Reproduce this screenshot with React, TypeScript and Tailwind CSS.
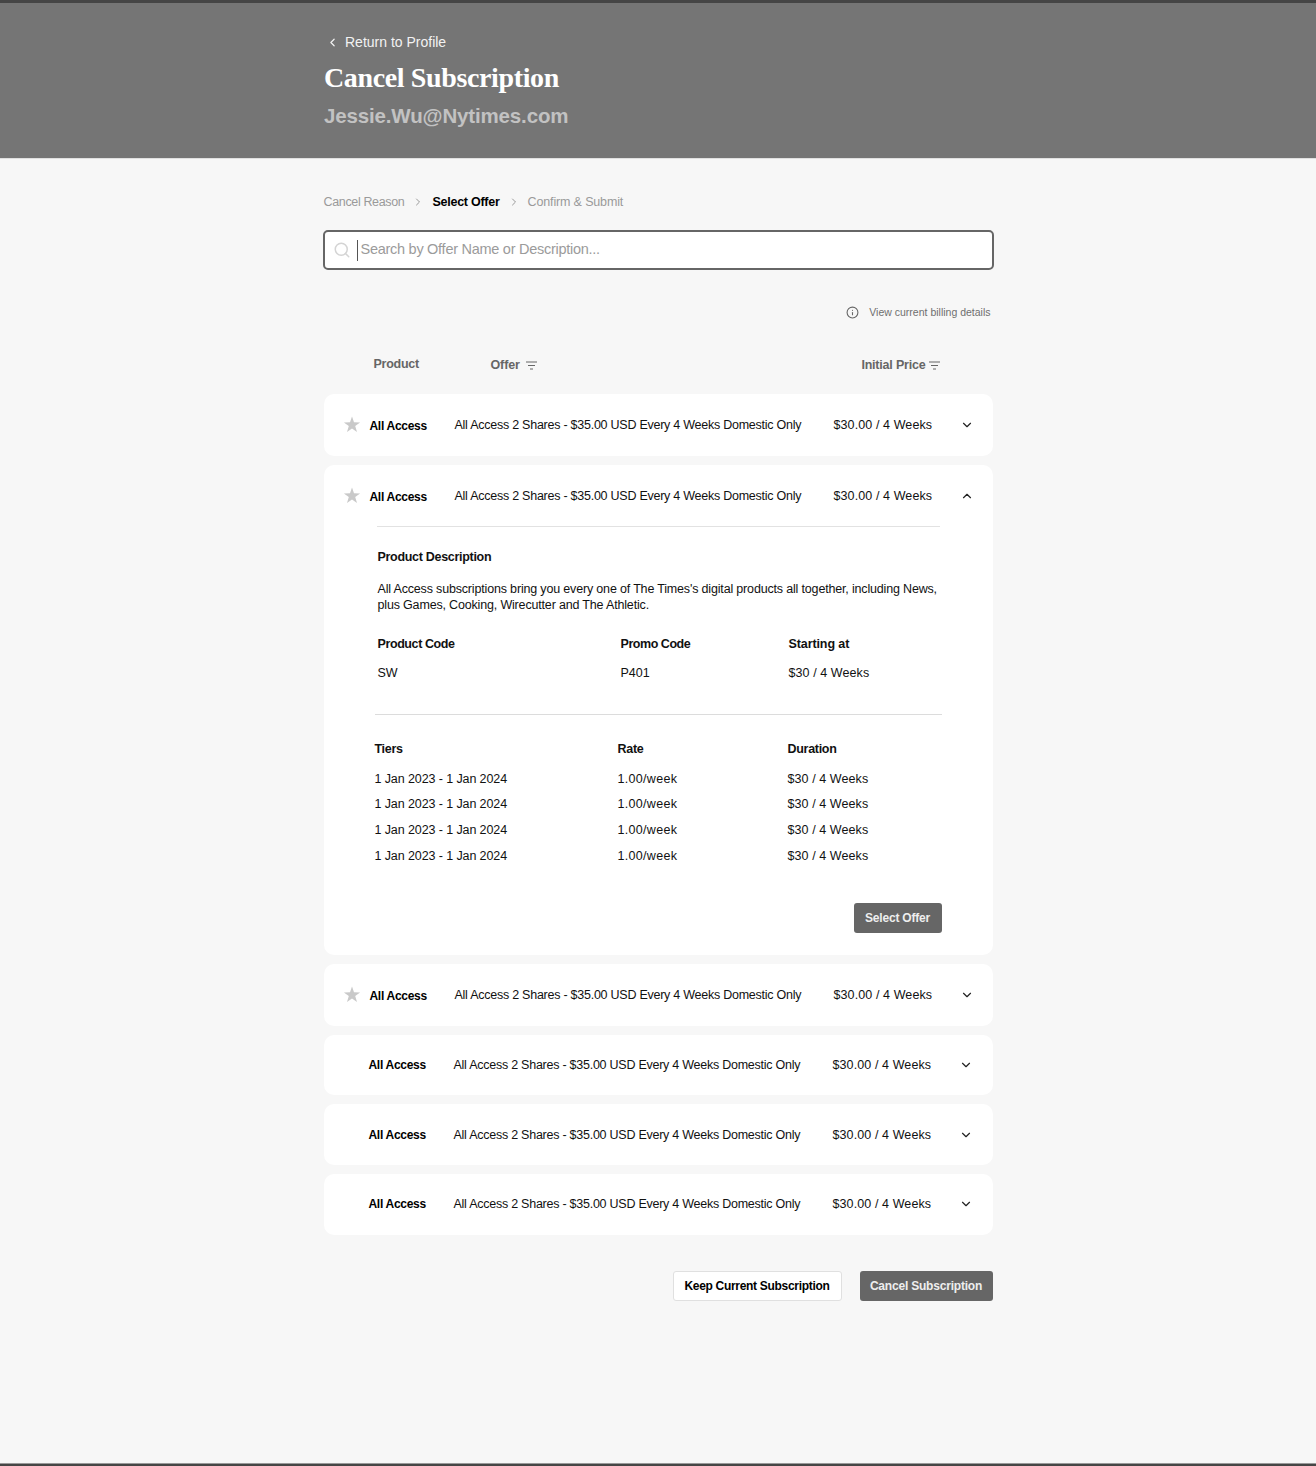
import { ChevronDown, ChevronLeft, ChevronRight, ChevronUp, Info, Search } from "lucide-react";

const sans = "font-['Liberation_Sans',Arial,sans-serif]";

const StarIcon = () => (
  <svg width="18" height="17" viewBox="0 0 18 17" className="shrink-0">
    <polygon points="9,0.5 11,6.3 17.1,6.4 12.2,10 14,15.9 9,12.4 4,15.9 5.8,10 0.9,6.4 7,6.3" fill="#c9c9c9" />
  </svg>
);

const FilterIcon = () => (
  <svg width="11" height="9" viewBox="0 0 11 9" className="shrink-0">
    <path d="M0 1h11M2 4.5h7M4 8h3" stroke="#666" strokeWidth="1" fill="none" />
  </svg>
);

const tiers = [1, 2, 3, 4];

const OfferRow = ({ star, open }: { star?: boolean; open?: boolean }) => (
  <div className={`flex items-center ${star ? "h-[62px]" : "h-[60.67px]"}`}>
    <div className={`flex items-center ${star ? "w-[131px] pl-[19px]" : "w-[130px] pl-[45px]"}`}>
      {star && <StarIcon />}
      <span className={`text-[12px] font-bold text-black tracking-[-0.3px] ${star ? "ml-[9px] mt-[3px]" : ""}`}>All Access</span>
    </div>
    <span className="mt-[1px] w-[379px] text-[12.5px] text-[#111] tracking-[-0.25px]">
      All Access 2 Shares - $35.00 USD Every 4 Weeks Domestic Only
    </span>
    <span className="mt-[1px] w-[126px] text-[12.5px] text-[#111] tracking-[0.1px]">$30.00 / 4 Weeks</span>
    {open ? <ChevronUp size={14} color="#222" /> : <ChevronDown size={14} color="#222" />}
  </div>
);

const OfferDetails = () => (
  <div className="-mt-[1px] px-[51px] pb-[22px] text-[12.5px] text-[#111]">
    <div className="mx-[2px] border-t border-[#e2e2e2]" />
    <div className="ml-[3px] pt-[22px]">
      <h3 className="text-[12.5px] font-bold leading-4 tracking-[-0.3px] text-[#111]">Product Description</h3>
      <p className="mt-[16px] w-[566px] leading-4 tracking-[-0.17px]">
        All Access subscriptions bring you every one of The Times's digital products all together, including News, plus Games, Cooking, Wirecutter and The Athletic.
      </p>
      <div className="mt-[23px] grid grid-cols-[243px_168px_1fr] font-bold leading-4">
        <span className="tracking-[-0.4px]">Product Code</span>
        <span className="tracking-[-0.45px]">Promo Code</span>
        <span className="tracking-[-0.1px]">Starting at</span>
      </div>
      <div className="mt-[13px] grid grid-cols-[243px_168px_1fr] leading-4">
        <span>SW</span>
        <span>P401</span>
        <span className="tracking-[0.08px]">$30 / 4 Weeks</span>
      </div>
    </div>
    <div className="mt-[33px] border-t border-[#dcdcdc]" />
    <div className="pt-[26px]">
      <div className="grid grid-cols-[243px_170px_1fr] font-bold leading-4 tracking-[-0.3px]">
        <span>Tiers</span>
        <span>Rate</span>
        <span>Duration</span>
      </div>
      <div className="mt-[14px] flex flex-col gap-[9.6px]">
        {tiers.map((t) => (
          <div key={t} className="grid grid-cols-[243px_170px_1fr] leading-4">
            <span className="tracking-[-0.1px]">1 Jan 2023 - 1 Jan 2024</span>
            <span className="tracking-[0.3px]">1.00/week</span>
            <span className="tracking-[0.08px]">$30 / 4 Weeks</span>
          </div>
        ))}
      </div>
    </div>
    <div className="mt-[39px] flex justify-end">
      <button className="h-[30px] w-[88px] rounded-[3px] bg-[#666] text-[12px] font-bold tracking-[-0.2px] text-[#eee]">Select Offer</button>
    </div>
  </div>
);

export default function App() {
  return (
    <div className={`${sans} flex min-h-[1466px] flex-col bg-[#f7f7f7]`}>
      <header className="h-[159px] border-t-[3px] border-b border-t-[#454545] border-b-[#e0e0e0] bg-[#757575]">
        <div className="mx-auto w-[668px] pt-[30px]">
          <div className="flex h-[18px] items-center pl-[2px] text-[14px] text-[#f2f2f2]">
            <ChevronLeft size={13} strokeWidth={2.25} color="#f2f2f2" />
            <span className="ml-[6px]">Return to Profile</span>
          </div>
          <h1 className="mt-[10px] font-['Liberation_Serif',serif] text-[28px] font-bold leading-[34px] tracking-[-0.37px] text-white">
            Cancel Subscription
          </h1>
          <p className="mt-[9px] text-[20.5px] font-bold leading-[24px] tracking-[-0.15px] text-[#c2c2c2]">Jessie.Wu@Nytimes.com</p>
        </div>
      </header>

      <main className="mx-auto w-[669px]">
        <nav className="mt-[35px] flex h-4 items-center text-[12.5px] text-[#9a9a9a]">
          <span className="tracking-[-0.35px]">Cancel Reason</span>
          <ChevronRight size={12} className="mx-[8px]" color="#999" />
          <span className="font-bold tracking-[-0.25px] text-black">Select Offer</span>
          <ChevronRight size={12} className="mx-[8px]" color="#999" />
          <span className="tracking-[-0.15px]">Confirm &amp; Submit</span>
        </nav>

        <div className="mt-[20px] -ml-[1px] flex h-[40px] w-[671px] items-center rounded-[5px] border-2 border-[#666] bg-white pl-[8px]">
          <Search size={18} color="#d4d4d4" />
          <span className="ml-[6px] h-[21px] w-[1px] bg-[#555]" />
          <span className="ml-[3px] text-[14.5px] tracking-[-0.27px] text-[#9b9b9b]">Search by Offer Name or Description...</span>
        </div>

        <div className="mt-[35px] flex items-center justify-end pr-[2px] text-[10.5px] text-[#6f6f6f]">
          <Info size={13} color="#666" />
          <span className="ml-[10px]">View current billing details</span>
        </div>

        <div className="mt-[37px] flex h-4 items-center text-[12.5px] font-bold text-[#666]">
          <span className="ml-[50px] -mt-[2px] w-[117px] tracking-[-0.25px]">Product</span>
          <span className="tracking-[-0.1px]">Offer</span>
          <span className="ml-[6.5px]"><FilterIcon /></span>
          <span className="ml-[324px] tracking-[-0.2px]">Initial Price</span>
          <span className="ml-[4px]"><FilterIcon /></span>
        </div>

        <div className="mt-[20px] flex flex-col gap-[9px]">
          <div className="rounded-[10px] bg-white"><OfferRow star /></div>
          <div className="rounded-[10px] bg-white">
            <OfferRow star open />
            <OfferDetails />
          </div>
          <div className="rounded-[10px] bg-white"><OfferRow star /></div>
          <div className="rounded-[10px] bg-white"><OfferRow /></div>
          <div className="rounded-[10px] bg-white"><OfferRow /></div>
          <div className="rounded-[10px] bg-white"><OfferRow /></div>
        </div>

        <div className="mt-[36px] flex justify-end gap-[18px]">
          <button className="h-[30px] w-[169px] rounded-[3px] border border-[#e0e0e0] bg-white text-[12px] font-bold tracking-[-0.3px] text-black">
            Keep Current Subscription
          </button>
          <button className="h-[30px] w-[133px] rounded-[3px] bg-[#666] text-[12px] font-bold tracking-[-0.2px] text-[#eee]">
            Cancel Subscription
          </button>
        </div>
      </main>

      <div className="mt-auto h-[3px] border-t border-t-[#999] bg-[#454545]" />
    </div>
  );
}
